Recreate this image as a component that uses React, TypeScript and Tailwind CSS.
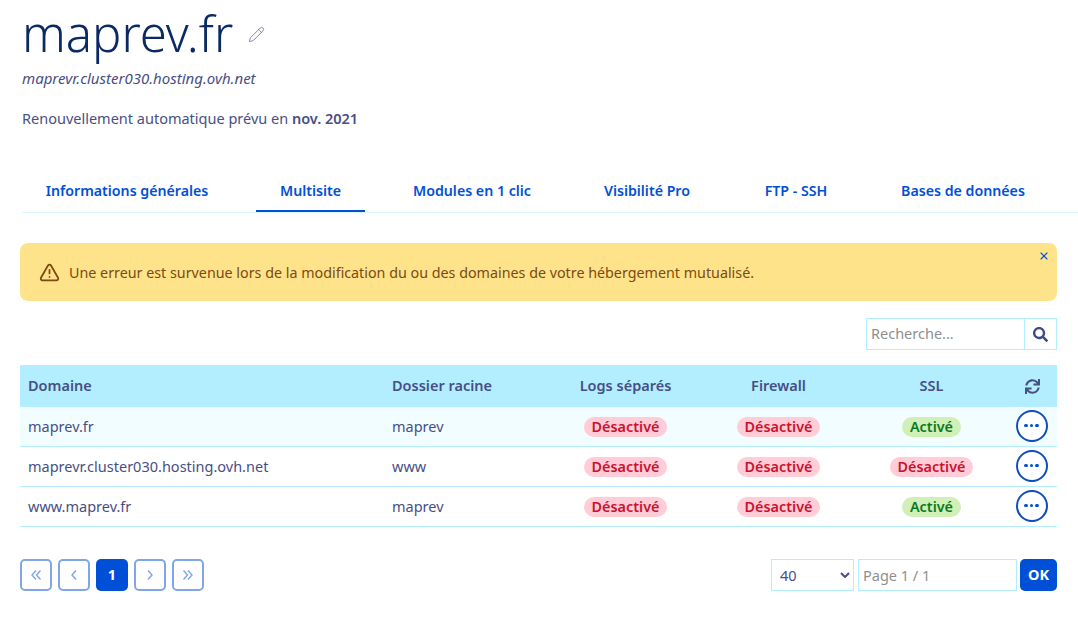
import { Pencil, TriangleAlert, X } from 'lucide-react';
import { FaSearch, FaSync } from 'react-icons/fa';

const TABS = [
  { label: 'Informations générales', width: 'w-[210px]' },
  { label: 'Multisite', width: 'w-[109px]' },
  { label: 'Modules en 1 clic', width: 'w-[166px]' },
  { label: 'Visibilité Pro', width: 'w-[136px]' },
  { label: 'FTP - SSH', width: 'w-[114px]' },
  { label: 'Bases de données', width: 'w-[172px]' },
];

const ROWS = [
  { domain: 'maprev.fr', folder: 'maprev', ssl: true },
  { domain: 'maprevr.cluster030.hosting.ovh.net', folder: 'www', ssl: false },
  { domain: 'www.maprev.fr', folder: 'maprev', ssl: true },
];

function Badge({ on }: { on: boolean }) {
  return on ? (
    <span className="inline-block h-[20px] rounded-full bg-[#d0f0b8] px-2 text-[14.4px] leading-[20px] font-semibold text-[#0a7a22]">Activé</span>
  ) : (
    <span className="inline-block h-[20px] rounded-full bg-[#ffccd8] px-2 text-[14.4px] leading-[20px] font-semibold text-[#c8142f]">Désactivé</span>
  );
}

function PageBtn({ d, w }: { d: string; w: number }) {
  return (
    <button className="flex h-[32px] w-[32px] items-center justify-center rounded-[5px] border-2 border-[#80a5e8] text-[#80a5e8]">
      <svg width={w} height="10" viewBox={`0 0 ${w} 10`} fill="none" stroke="currentColor" strokeWidth="1.4">
        <path d={d} />
      </svg>
    </button>
  );
}

export default function App() {
  return (
    <div className="h-[620px] w-[1078px] overflow-hidden bg-white font-['Noto_Sans',sans-serif] text-[#474f85]">
      {/* Title */}
      <div className="flex items-center pl-[22px] pt-[1px]">
        <h1 className="text-[49px] leading-[64px] font-light text-[#0b2a63]">maprev.fr</h1>
        <Pencil className="ml-[15px] mt-[3px] h-[17px] w-[17px] text-[#4d5693]" strokeWidth={1} />
      </div>
      <p className="mt-[3px] pl-[22px] text-[15px] leading-[20px] italic">maprevr.cluster030.hosting.ovh.net</p>
      <p className="mt-[20px] pl-[22px] text-[14.5px] leading-[20px]">
        Renouvellement automatique prévu en <b className="font-semibold">nov. 2021</b>
      </p>

      {/* Tabs */}
      <div className="ml-[22px] mt-[41px] flex gap-6 border-b border-[#d9f5ff]">
        {TABS.map((t, i) => (
          <div
            key={t.label}
            className={`h-[43px] whitespace-nowrap border-b-2 pt-[12px] text-center text-[14.2px] leading-[20px] font-semibold text-[#0050d7] ${t.width} ${
              i === 1 ? 'border-[#0050d7]' : 'border-transparent'
            }`}
          >
            {t.label}
          </div>
        ))}
      </div>

      <div className="ml-[20px] mr-[21px] mt-[30px]">
        {/* Alert */}
        <div className="relative flex h-[58px] items-center gap-[9px] rounded-[8px] bg-[#ffe38a] pl-[19px] text-[14.3px] text-[#7c4a12]">
          <TriangleAlert className="h-[21px] w-[21px]" strokeWidth={2} />
          <span className="pt-[2px]">Une erreur est survenue lors de la modification du ou des domaines de votre hébergement mutualisé.</span>
          <X className="absolute right-[7px] top-[7px] h-[12px] w-[12px] text-[#0050d7]" strokeWidth={2.2} />
        </div>

        {/* Search */}
        <div className="mt-[17px] flex justify-end">
          <div className="flex h-[32px] w-[191px] border border-[#b2eeff]">
            <div className="flex-1 pl-1 text-[14.5px] leading-[28px] text-[#8f8f8f]">Recherche...</div>
            <div className="flex w-[32px] items-center justify-center border-l border-[#b2eeff]">
              <FaSearch className="h-[15px] w-[15px] text-[#3d4a8a]" />
            </div>
          </div>
        </div>

        {/* Table */}
        <table className="mt-[15px] w-[1037px] table-fixed border-separate border-spacing-0 text-[14.5px]">
          <colgroup>
            <col className="w-[364px]" />
            <col className="w-[165px]" />
            <col className="w-[153px]" />
            <col className="w-[153px]" />
            <col className="w-[153px]" />
            <col className="w-[49px]" />
          </colgroup>
          <thead>
            <tr className="h-[42px] bg-[#b2eeff]">
              <th className="pl-2 text-left font-semibold">Domaine</th>
              <th className="pl-2 text-left font-semibold">Dossier racine</th>
              <th className="font-semibold">Logs séparés</th>
              <th className="font-semibold">Firewall</th>
              <th className="font-semibold">SSL</th>
              <th>
                <FaSync className="mx-auto h-[15px] w-[15px]" />
              </th>
            </tr>
          </thead>
          <tbody>
            {ROWS.map((r, i) => (
              <tr key={r.domain} className={`h-[40px] ${i === 0 ? 'bg-[#f2fdff]' : ''}`}>
                <td className="border-b border-[#b2eeff] pl-2">{r.domain}</td>
                <td className="border-b border-[#b2eeff] pl-2">{r.folder}</td>
                <td className="border-b border-[#b2eeff] text-center"><Badge on={false} /></td>
                <td className="border-b border-[#b2eeff] text-center"><Badge on={false} /></td>
                <td className="border-b border-[#b2eeff] text-center"><Badge on={r.ssl} /></td>
                <td className="border-b border-[#b2eeff]">
                  <div className="mx-auto flex h-[32px] w-[32px] -translate-x-px -translate-y-px items-center justify-center gap-[2px] rounded-full border-2 border-[#0f4db8] bg-white">
                    <span className="h-[3.5px] w-[3.5px] rounded-full bg-[#0050d7]" />
                    <span className="h-[3.5px] w-[3.5px] rounded-full bg-[#0050d7]" />
                    <span className="h-[3.5px] w-[3.5px] rounded-full bg-[#0050d7]" />
                  </div>
                </td>
              </tr>
            ))}
          </tbody>
        </table>

        {/* Pagination */}
        <div className="mt-[32px] flex items-center justify-between">
          <div className="flex gap-[6px]">
            <PageBtn w={10} d="M5 .5L1 5l4 4.5M9.5 .5L5.5 5l4 4.5" />
            <PageBtn w={6} d="M5 .5L1 5l4 4.5" />
            <button className="h-[32px] w-[32px] rounded-[5px] bg-[#0050d7] text-[14.5px] font-bold text-white">1</button>
            <PageBtn w={6} d="M1 .5L5 5 1 9.5" />
            <PageBtn w={10} d="M.5 .5L4.5 5l-4 4.5M5 .5L9 5 5 9.5" />
          </div>
          <div className="flex">
            <div className="flex h-[32px] w-[83px] items-center justify-between border border-[#b2eeff] pl-2 pr-[3px] text-[14.5px]">
              <span className="pt-[2px]">40</span>
              <svg viewBox="0 0 10 6" className="h-[6px] w-[10px]" fill="none" stroke="currentColor" strokeWidth="2">
                <path d="M1 1l4 4 4-4" />
              </svg>
            </div>
            <div className="ml-[4px] h-[32px] w-[159px] border border-[#b2eeff] pl-1 text-[14.5px] leading-[30px] text-[#8f8f8f]">Page 1 / 1</div>
            <button className="ml-[3px] h-[32px] w-[37px] rounded-[5px] bg-[#0050d7] text-[14.5px] font-bold text-white">OK</button>
          </div>
        </div>
      </div>
    </div>
  );
}
